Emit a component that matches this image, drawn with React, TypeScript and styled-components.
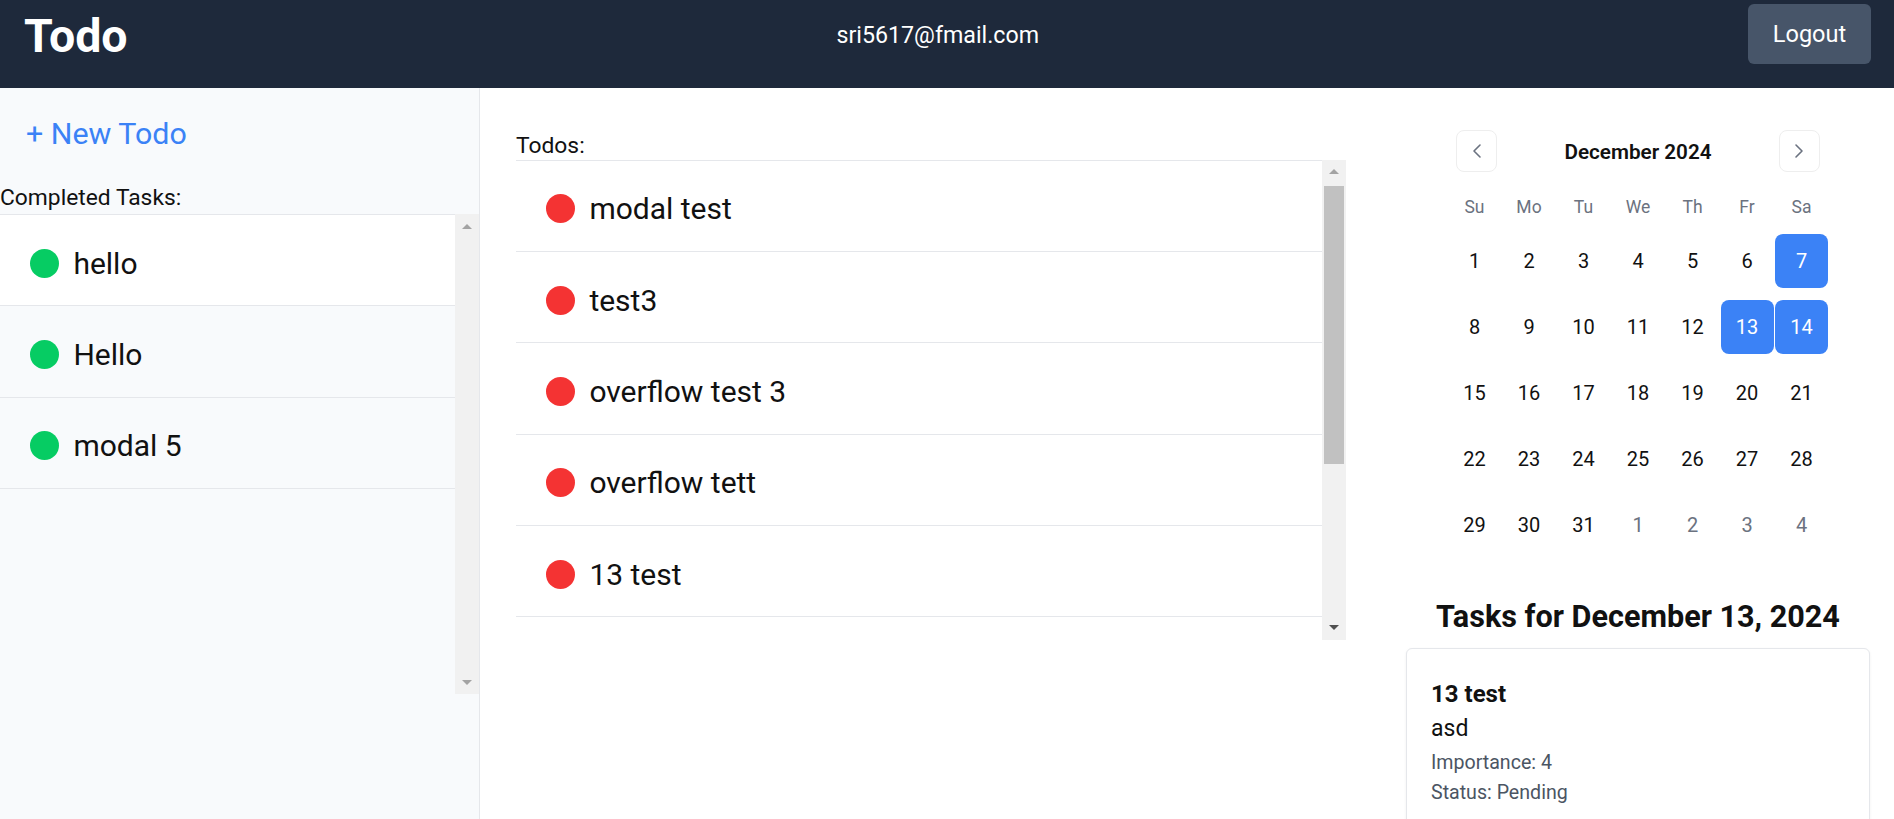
import React from 'react';
import styled, { createGlobalStyle } from 'styled-components';
import { ChevronLeft, ChevronRight } from 'lucide-react';

const FONT = `Roboto, "Open Sans", "Noto Sans", sans-serif`;

const Global = createGlobalStyle`
  * { box-sizing: border-box; }
  html, body { margin: 0; padding: 0; height: 100%; }
  body { font-family: ${FONT}; background: #fff; color: #111827; overflow: hidden; }
`;

const Page = styled.div`
  display: flex;
  flex-direction: column;
  height: 100vh;
`;

const Header = styled.header`
  flex: none;
  height: 88px;
  background: #1e293b;
  color: #fff;
  display: flex;
  align-items: center;
  justify-content: space-between;
  padding: 4px 23px 24px 24px;
`;

const Brand = styled.h1`
  margin: 4px 0 0;
  font-size: 46.5px;
  font-weight: 700;
  line-height: 1;
`;

const Email = styled.span`
  font-size: 23.2px;
  margin-top: 2px;
`;

const LogoutButton = styled.button`
  height: 60px;
  width: 123px;
  padding: 0;
  background: #475569;
  color: #fff;
  border: 0;
  border-radius: 6px;
  font-family: inherit;
  font-size: 23.5px;
`;

const Body = styled.div`
  flex: 1;
  display: flex;
  min-height: 0;
`;

const Sidebar = styled.aside`
  width: 480px;
  flex: none;
  background: #f8fafc;
  border-right: 1px solid #e5e7eb;
  display: flex;
  flex-direction: column;
`;

const NewTodoButton = styled.button`
  align-self: flex-start;
  margin-top: 27px;
  padding: 0 0 0 26px;
  background: none;
  border: 0;
  color: #3b82f6;
  font-family: inherit;
  font-size: 30.4px;
  line-height: 38px;
`;

const SectionLabel = styled.div<{ $top: number }>`
  margin-top: ${p => p.$top}px;
  font-size: 22.8px;
  line-height: 28px;
  color: #111;
`;

const ListFrame = styled.div<{ $top: number }>`
  margin-top: ${p => p.$top}px;
  height: 480px;
  flex: none;
  display: flex;
`;

const ListViewport = styled.div`
  flex: 1;
  min-width: 0;
  overflow: hidden;
`;

const ScrollTrack = styled.div`
  width: 24px;
  flex: none;
  background: #f1f1f1;
  display: flex;
  flex-direction: column;
`;

const ScrollArrow = styled.div<{ $dir: 'up' | 'down'; $color: string }>`
  height: 24px;
  flex: none;
  display: flex;
  align-items: center;
  justify-content: center;

  &::before {
    content: '';
    width: 0;
    height: 0;
    border-left: 5px solid transparent;
    border-right: 5px solid transparent;
    ${p =>
      p.$dir === 'up'
        ? `border-bottom: 5px solid ${p.$color};`
        : `border-top: 5px solid ${p.$color};`}
  }
`;

const ThumbArea = styled.div`
  flex: 1;
  padding: 2px 2px;
  display: flex;
  flex-direction: column;
`;

const ScrollThumb = styled.div<{ $size: number }>`
  height: ${p => p.$size}%;
  background: #c1c1c1;
`;

const RowGroup = styled.div`
  border-top: 1px solid #e5e7eb;
`;

const TaskRow = styled.div<{ $bg: string }>`
  height: 91.4px;
  display: flex;
  align-items: center;
  gap: 14.4px;
  padding: 6px 0 0 30px;
  border-bottom: 1px solid #e5e7eb;
  background: ${p => p.$bg};
  font-size: 30px;
  color: #111;
`;

const Dot = styled.span<{ $color: string }>`
  width: 29px;
  height: 29px;
  border-radius: 50%;
  background: ${p => p.$color};
  flex: none;
`;

const MainColumn = styled.main`
  flex: 1;
  min-width: 0;
  padding: 43.5px 36px 0;
  display: flex;
  flex-direction: column;
`;

const TodosLabel = styled.div`
  font-size: 22.8px;
  line-height: 28px;
  color: #111;
`;

const RightColumn = styled.section`
  width: 512px;
  flex: none;
  padding: 42px 24px 0;
  display: flex;
  flex-direction: column;
`;

const Calendar = styled.div`
  width: 380px;
  align-self: center;
`;

const CalNav = styled.div`
  display: flex;
  align-items: center;
  justify-content: space-between;
  padding: 0 8px;
`;

const NavButton = styled.button`
  width: 41px;
  height: 42px;
  border: 1px solid #eeeeee;
  border-radius: 8px;
  background: #fff;
  display: flex;
  align-items: center;
  justify-content: center;
  color: #6b7280;
  padding: 0;
`;

const MonthTitle = styled.div`
  font-size: 20.7px;
  font-weight: 600;
  color: #111;
  margin-top: 2px;
`;

const DayGrid = styled.div`
  display: grid;
  grid-template-columns: repeat(7, 53px);
  column-gap: 1.5px;
  row-gap: 12px;
  margin-top: 20px;
`;

const Weekday = styled.div`
  height: 30px;
  display: flex;
  align-items: center;
  justify-content: center;
  color: #6b7280;
  font-size: 17.5px;
`;

const Day = styled.div<{ $muted?: boolean; $selected?: boolean }>`
  height: 54px;
  display: flex;
  align-items: center;
  justify-content: center;
  border-radius: 8px;
  font-size: 20px;
  color: ${p => (p.$selected ? '#fff' : p.$muted ? '#6b7280' : '#111')};
  background: ${p => (p.$selected ? '#3b82f6' : 'transparent')};
`;

const TasksTitle = styled.h2`
  margin: 46px 0 0;
  text-align: center;
  font-size: 30.6px;
  line-height: 38px;
  font-weight: 700;
  color: #111;
`;

const TaskCard = styled.div`
  margin-top: 12px;
  border: 1px solid #e5e7eb;
  border-radius: 6px;
  box-shadow: 0 1px 3px rgba(0, 0, 0, 0.06);
  padding: 29px 24px 24px;
  background: #fff;
`;

const CardTitle = styled.div`
  font-size: 24px;
  line-height: 32px;
  font-weight: 700;
  color: #111;
`;

const CardText = styled.div`
  margin-top: 3px;
  font-size: 23px;
  line-height: 32px;
  color: #111;
`;

const CardMeta = styled.div<{ $top: number }>`
  margin-top: ${p => p.$top}px;
  font-size: 19.6px;
  line-height: 28px;
  color: #4b5563;
`;

const GREEN = '#06cc63';
const RED = '#f43333';
const ARROW_IDLE = '#a3a3a3';
const ARROW_ACTIVE = '#505050';

const completed = ['hello', 'Hello', 'modal 5'];
const todos = ['modal test', 'test3', 'overflow test 3', 'overflow tett', '13 test'];
const weekdays = ['Su', 'Mo', 'Tu', 'We', 'Th', 'Fr', 'Sa'];

type Cell = { d: number; muted?: boolean };
const cells: Cell[] = [
  ...Array.from({ length: 31 }, (_, i) => ({ d: i + 1 })),
  { d: 1, muted: true },
  { d: 2, muted: true },
  { d: 3, muted: true },
  { d: 4, muted: true },
];
const selected = new Set([7, 13, 14]);

function Scrollbar({ thumb, downColor }: { thumb?: number; downColor: string }) {
  return (
    <ScrollTrack>
      <ScrollArrow $dir="up" $color={ARROW_IDLE} />
      <ThumbArea>{thumb ? <ScrollThumb $size={thumb} /> : null}</ThumbArea>
      <ScrollArrow $dir="down" $color={downColor} />
    </ScrollTrack>
  );
}

export default function App() {
  return (
    <Page>
      <Global />
      <Header>
        <Brand>Todo</Brand>
        <Email>sri5617@fmail.com</Email>
        <LogoutButton>Logout</LogoutButton>
      </Header>
      <Body>
        <Sidebar>
          <NewTodoButton>+ New Todo</NewTodoButton>
          <SectionLabel $top={31}>Completed Tasks:</SectionLabel>
          <ListFrame $top={2}>
            <ListViewport>
              <RowGroup>
                {completed.map((t, i) => (
                  <TaskRow key={t} $bg={i === 0 ? '#ffffff' : '#f8fafc'}>
                    <Dot $color={GREEN} />
                    {t}
                  </TaskRow>
                ))}
              </RowGroup>
            </ListViewport>
            <Scrollbar downColor={ARROW_IDLE} />
          </ListFrame>
        </Sidebar>
        <MainColumn>
          <TodosLabel>Todos:</TodosLabel>
          <ListFrame $top={0}>
            <ListViewport>
              <RowGroup>
                {todos.map(t => (
                  <TaskRow key={t} $bg="#ffffff">
                    <Dot $color={RED} />
                    {t}
                  </TaskRow>
                ))}
              </RowGroup>
            </ListViewport>
            <Scrollbar thumb={65} downColor={ARROW_ACTIVE} />
          </ListFrame>
        </MainColumn>
        <RightColumn>
          <Calendar>
            <CalNav>
              <NavButton aria-label="Previous month">
                <ChevronLeft size={24} strokeWidth={1.6} />
              </NavButton>
              <MonthTitle>December 2024</MonthTitle>
              <NavButton aria-label="Next month">
                <ChevronRight size={24} strokeWidth={1.6} />
              </NavButton>
            </CalNav>
            <DayGrid>
              {weekdays.map(w => (
                <Weekday key={w}>{w}</Weekday>
              ))}
              {cells.map((c, i) => (
                <Day key={i} $muted={c.muted} $selected={!c.muted && selected.has(c.d)}>
                  {c.d}
                </Day>
              ))}
            </DayGrid>
          </Calendar>
          <TasksTitle>Tasks for December 13, 2024</TasksTitle>
          <TaskCard>
            <CardTitle>13 test</CardTitle>
            <CardText>asd</CardText>
            <CardMeta $top={4}>Importance: 4</CardMeta>
            <CardMeta $top={2}>Status: Pending</CardMeta>
          </TaskCard>
        </RightColumn>
      </Body>
    </Page>
  );
}
